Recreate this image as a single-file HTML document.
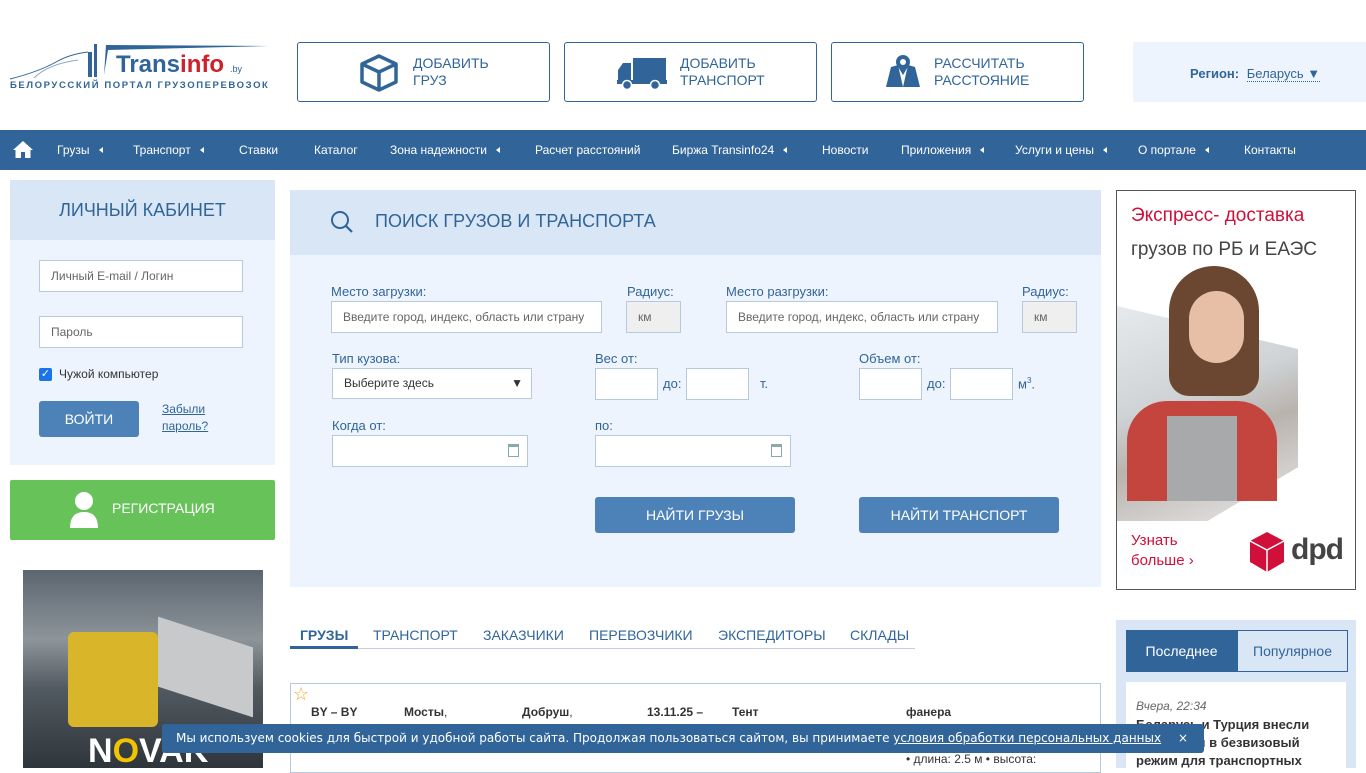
<!DOCTYPE html>
<html><head><meta charset="utf-8">
<style>
*{box-sizing:border-box;margin:0;padding:0}
body{width:1366px;height:768px;overflow:hidden;position:relative;background:#fff;font-family:"Liberation Sans",Arial,sans-serif;color:#31659a}
.a{position:absolute}
.n{font-family:"Liberation Sans Narrow","Liberation Sans",sans-serif}
.hb{position:absolute;top:42px;width:253px;height:60px;border:1px solid #31659a;border-radius:3px;font-size:14px;line-height:17px;color:#31659a}
.nav{position:absolute;top:130px;left:0;width:1366px;height:40px;background:#31659a}
.nav span{position:absolute;top:13px;color:#fff;font-size:12px}
.tri{display:inline-block;width:0;height:0;border-top:3px solid transparent;border-bottom:3px solid transparent;border-right:4px solid #fff;margin-left:9px;vertical-align:1px}
.lbl{position:absolute;font-size:13px;color:#31659a}
.inp{position:absolute;background:#fff;border:1px solid #b6c9dd;font-size:12px;color:#666;padding-left:11px}
.btn{position:absolute;background:#4d82b8;color:#fff;border-radius:3px;text-align:center;font-size:14px}
.tab{position:absolute;top:627px;font-size:14px;color:#31659a}
.row{position:absolute;top:705px;font-size:12px;font-weight:bold;color:#333}
</style></head><body>

<svg class="a" style="left:8px;top:42px" width="262" height="50">
<path d="M2 37 Q30 30 48 20 Q62 12 80 10" stroke="#31659a" stroke-width="1" fill="none"/>
<path d="M26 36 Q40 22 70 18" stroke="#8aa8c8" stroke-width="1" fill="none"/>
<rect x="80" y="10" width="4" height="25" fill="#31659a"/>
<rect x="86" y="2" width="3" height="33" fill="#31659a"/>
<path d="M96 33 L98 3 L260 4 L100 8 Z" fill="#31659a"/>
<text x="108" y="30" font-family="Liberation Sans" font-weight="bold" font-size="24" fill="#31659a">Trans<tspan fill="#d0202a">info</tspan></text>
<text x="222" y="30" font-family="Liberation Sans" font-size="9" fill="#31659a">.by</text>
<text x="2" y="46" font-family="Liberation Sans" font-weight="bold" font-size="9.5" letter-spacing="1.6" fill="#31659a">БЕЛОРУССКИЙ  ПОРТАЛ  ГРУЗОПЕРЕВОЗОК</text>
</svg>

<div class="hb" style="left:297px">
<svg class="a" style="left:60px;top:10px" width="42" height="40"><path d="M21 3 L38 11 L38 29 L21 37 L4 29 L4 11 Z M4 11 L21 19 L38 11 M21 19 L21 37" stroke="#31659a" stroke-width="3.5" fill="none" stroke-linejoin="round"/></svg>
<div class="a" style="left:115px;top:12px">ДОБАВИТЬ<br>ГРУЗ</div></div>
<div class="hb" style="left:564px">
<svg class="a" style="left:51px;top:13px" width="52" height="34"><rect x="17" y="2" width="33" height="22" fill="#31659a"/><path d="M2 24 L2 14 L7 7 L15 7 L15 24 Z" fill="#31659a"/><rect x="1" y="24" width="50" height="4" fill="#31659a"/><circle cx="11" cy="29" r="4.5" fill="#31659a" stroke="#fff" stroke-width="1.5"/><circle cx="39" cy="29" r="4.5" fill="#31659a" stroke="#fff" stroke-width="1.5"/></svg>
<div class="a" style="left:115px;top:12px">ДОБАВИТЬ<br>ТРАНСПОРТ</div></div>
<div class="hb" style="left:831px">
<svg class="a" style="left:53px;top:10px" width="36" height="36"><path d="M1 34 L6 14 L13 12 L18 34 L23 12 L30 14 L35 34 Z" fill="#31659a"/><circle cx="18" cy="9" r="7" fill="#31659a"/><circle cx="18" cy="9" r="3" fill="#fff"/><path d="M12 12 L18 22 L24 12Z" fill="#31659a"/></svg>
<div class="a" style="left:102px;top:12px">РАССЧИТАТЬ<br>РАССТОЯНИЕ</div></div>

<div class="a" style="left:1133px;top:42px;width:233px;height:60px;background:#edf4fd"></div>
<div class="a" style="left:1190px;top:66px;font-size:13px"><b>Регион:</b> <span style="margin-left:4px;border-bottom:1px dotted #31659a">Беларусь <span style="font-size:13px">▼</span></span></div>

<div class="nav n">
<svg class="a" style="left:12px;top:10px" width="22" height="19"><path d="M11 1 L1 10 L3.5 10 L3.5 18 L9 18 L9 12 L13 12 L13 18 L18.5 18 L18.5 10 L21 10 Z" fill="#fff"/></svg>
<span style="left:57px">Грузы<i class="tri"></i></span>
<span style="left:133px">Транспорт<i class="tri"></i></span>
<span style="left:239px">Ставки</span>
<span style="left:314px">Каталог</span>
<span style="left:390px">Зона надежности<i class="tri"></i></span>
<span style="left:535px">Расчет расстояний</span>
<span style="left:672px">Биржа Transinfo24<i class="tri"></i></span>
<span style="left:822px">Новости</span>
<span style="left:901px">Приложения<i class="tri"></i></span>
<span style="left:1015px">Услуги и цены<i class="tri"></i></span>
<span style="left:1138px">О портале<i class="tri"></i></span>
<span style="left:1244px">Контакты</span>
</div>

<div class="a" style="left:10px;top:180px;width:265px;height:60px;background:#d9e6f5;text-align:center;font-size:18px;line-height:60px">ЛИЧНЫЙ КАБИНЕТ</div>
<div class="a" style="left:10px;top:240px;width:265px;height:225px;background:#edf4fd"></div>
<div class="inp n" style="left:39px;top:260px;width:204px;height:32px;line-height:30px">Личный E-mail / Логин</div>
<div class="inp n" style="left:39px;top:316px;width:204px;height:32px;line-height:30px">Пароль</div>
<div class="a" style="left:39px;top:368px;width:13px;height:13px;background:#1a73e8;border-radius:2px;color:#fff;font-size:11px;line-height:13px;text-align:center">✓</div>
<div class="a n" style="left:59px;top:367px;font-size:12px;color:#333">Чужой компьютер</div>
<div class="btn" style="left:39px;top:401px;width:100px;height:36px;line-height:36px">ВОЙТИ</div>
<div class="a n" style="left:162px;top:401px;font-size:12px;line-height:17px;text-decoration:underline">Забыли<br>пароль?</div>
<div class="a" style="left:10px;top:480px;width:265px;height:60px;background:#67c25a;border-radius:2px"></div>
<svg class="a" style="left:68px;top:490px" width="32" height="40"><circle cx="16" cy="11" r="9" fill="#fff"/><path d="M2 38 Q2 22 16 22 Q30 22 30 38 Z" fill="#fff"/></svg>
<div class="a" style="left:112px;top:500px;color:#fff;font-size:14px">РЕГИСТРАЦИЯ</div>

<div class="a" style="left:23px;top:570px;width:240px;height:198px;background:linear-gradient(180deg,#5c6670 0%,#8d949a 35%,#525a61 60%,#2e353b 100%);overflow:hidden">
<div class="a" style="left:45px;top:62px;width:90px;height:95px;background:#d9b529;border-radius:6px"></div>
<div class="a" style="left:135px;top:62px;width:95px;height:70px;background:#c7c9cb;transform:skewY(18deg)"></div>
<div class="a" style="left:65px;top:162px;font-size:34px;font-weight:bold;color:#fff">N<span style="color:#f2c300">O</span>VAK</div>
</div>

<div class="a" style="left:290px;top:190px;width:811px;height:65px;background:#d9e6f5"></div>
<div class="a" style="left:290px;top:255px;width:811px;height:332px;background:#edf4fd"></div>
<svg class="a" style="left:330px;top:210px" width="24" height="24"><circle cx="10" cy="10" r="8" stroke="#31659a" stroke-width="2" fill="none"/><path d="M16 16 L22 22" stroke="#31659a" stroke-width="2.2"/></svg>
<div class="a" style="left:375px;top:211px;font-size:18px">ПОИСК ГРУЗОВ И ТРАНСПОРТА</div>
<div class="lbl n" style="left:331px;top:284px">Место загрузки:</div>
<div class="lbl n" style="left:627px;top:284px">Радиус:</div>
<div class="lbl n" style="left:726px;top:284px">Место разгрузки:</div>
<div class="lbl n" style="left:1022px;top:284px">Радиус:</div>
<div class="inp n" style="left:331px;top:301px;width:271px;height:32px;line-height:30px">Введите город, индекс, область или страну</div>
<div class="inp n" style="left:626px;top:301px;width:55px;height:32px;line-height:30px;background:#efefef">км</div>
<div class="inp n" style="left:726px;top:301px;width:272px;height:32px;line-height:30px">Введите город, индекс, область или страну</div>
<div class="inp n" style="left:1022px;top:301px;width:55px;height:32px;line-height:30px;background:#efefef">км</div>
<div class="lbl n" style="left:332px;top:351px">Тип кузова:</div>
<div class="lbl n" style="left:595px;top:351px">Вес от:</div>
<div class="lbl n" style="left:859px;top:351px">Объем от:</div>
<div class="inp n" style="left:332px;top:368px;width:200px;height:31px;line-height:29px;color:#333">Выберите здесь<span style="position:absolute;right:8px;font-size:12px">▼</span></div>
<div class="inp" style="left:595px;top:368px;width:63px;height:32px"></div>
<div class="lbl n" style="left:663px;top:376px">до:</div>
<div class="inp" style="left:686px;top:368px;width:63px;height:32px"></div>
<div class="lbl n" style="left:760px;top:376px">т.</div>
<div class="inp" style="left:859px;top:368px;width:63px;height:32px"></div>
<div class="lbl n" style="left:927px;top:376px">до:</div>
<div class="inp" style="left:950px;top:368px;width:63px;height:32px"></div>
<div class="lbl n" style="left:1018px;top:376px">м<sup style="font-size:8px">3</sup>.</div>
<div class="lbl n" style="left:332px;top:418px">Когда от:</div>
<div class="lbl n" style="left:595px;top:418px">по:</div>
<div class="inp" style="left:332px;top:435px;width:196px;height:32px"><span style="position:absolute;right:8px;top:8px;width:11px;height:13px;border:1px solid #8aa;border-top:3px solid #8aa"></span></div>
<div class="inp" style="left:595px;top:435px;width:196px;height:32px"><span style="position:absolute;right:8px;top:8px;width:11px;height:13px;border:1px solid #8aa;border-top:3px solid #8aa"></span></div>
<div class="btn n" style="left:595px;top:497px;width:200px;height:36px;line-height:36px">НАЙТИ ГРУЗЫ</div>
<div class="btn n" style="left:859px;top:497px;width:200px;height:36px;line-height:36px">НАЙТИ ТРАНСПОРТ</div>

<div class="a" style="left:290px;top:648px;width:625px;height:1px;background:#ccd"></div>
<div class="a" style="left:290px;top:646px;width:68px;height:3px;background:#31659a"></div>
<div class="tab n" style="left:300px;font-weight:bold">ГРУЗЫ</div>
<div class="tab n" style="left:373px">ТРАНСПОРТ</div>
<div class="tab n" style="left:483px">ЗАКАЗЧИКИ</div>
<div class="tab n" style="left:589px">ПЕРЕВОЗЧИКИ</div>
<div class="tab n" style="left:718px">ЭКСПЕДИТОРЫ</div>
<div class="tab n" style="left:850px">СКЛАДЫ</div>

<div class="a" style="left:290px;top:683px;width:811px;height:90px;border:1px solid #b6c9dd"></div>
<div class="a" style="left:293px;top:684px;color:#f5a623;font-size:18px">☆</div>
<div class="row n" style="left:311px">BY – BY</div>
<div class="row n" style="left:404px">Мосты<span style="font-weight:normal">,</span></div>
<div class="row n" style="left:522px">Добруш<span style="font-weight:normal">,</span></div>
<div class="row n" style="left:647px">13.11.25 –</div>
<div class="row n" style="left:732px">Тент</div>
<div class="row n" style="left:906px">фанера</div>
<div class="a n" style="left:906px;top:752px;font-size:12px;color:#333">• длина: 2.5 м • высота:</div>

<div class="a" style="left:1116px;top:190px;width:240px;height:400px;border:1px solid #555;background:#fff;overflow:hidden">
<div class="a" style="left:14px;top:14px;font-size:19px;color:#d0103a">Экспресс- доставка</div>
<div class="a" style="left:14px;top:48px;font-size:19px;color:#444">грузов по РБ и ЕАЭС</div>
<div class="a" style="left:0;top:115px;width:181px;height:215px;background:linear-gradient(160deg,#e6eaec,#cfd3d6 40%,#b9b3ae 60%,#e9e9e9);clip-path:polygon(0 0,100% 20%,100% 75%,50% 100%,0 100%)"></div>
<div class="a" style="left:10px;top:210px;width:150px;height:100px;background:#c4453d;border-radius:40px 40px 0 0"></div>
<div class="a" style="left:50px;top:225px;width:70px;height:85px;background:#a8a9aa"></div>
<div class="a" style="left:52px;top:75px;width:90px;height:130px;background:#6b4630;border-radius:45px 45px 20px 20px"></div>
<div class="a" style="left:72px;top:100px;width:55px;height:72px;background:#e7bfa6;border-radius:28px"></div>
<div class="a" style="left:14px;top:340px;font-size:15px;color:#d0103a;line-height:20px">Узнать<br>больше ›</div>
<svg class="a" style="left:132px;top:340px" width="36" height="42"><path d="M18 1 L35 10 L35 31 L18 41 L1 31 L1 10 Z" fill="#d0103a"/><path d="M1 10 L18 19 L35 10 M18 19 L18 41" stroke="#fff" stroke-width="1.5" fill="none"/></svg>
<div class="a" style="left:174px;top:342px;font-size:30px;font-weight:bold;color:#444;letter-spacing:-1px">dpd</div>
</div>

<div class="a" style="left:1116px;top:620px;width:240px;height:148px;background:#d9e6f5"></div>
<div class="a" style="left:1126px;top:630px;width:111px;height:42px;background:#31659a;color:#fff;font-size:14px;line-height:42px;text-align:center">Последнее</div>
<div class="a" style="left:1237px;top:630px;width:111px;height:42px;border:1px solid #31659a;color:#31659a;font-size:14px;line-height:40px;text-align:center">Популярное</div>
<div class="a" style="left:1126px;top:682px;width:220px;height:86px;background:#fff"></div>
<div class="a" style="left:1136px;top:699px;font-size:12px;color:#666;font-style:italic">Вчера, 22:34</div>
<div class="a" style="left:1136px;top:716px;font-size:13px;font-weight:bold;color:#333;line-height:18px;width:205px">Беларусь и Турция внесли изменения в безвизовый режим для транспортных</div>

<div class="a" style="left:162px;top:724px;width:1042px;height:29px;background:#31659a;border-radius:3px;color:#fff;font-family:'DejaVu Sans',sans-serif;font-size:12px;line-height:29px;padding-left:14px;white-space:nowrap">Мы используем cookies для быстрой и удобной работы сайта. Продолжая пользоваться сайтом, вы принимаете <u>условия обработки персональных данных</u><span style="position:absolute;left:1016px">×</span></div>
</body></html>
